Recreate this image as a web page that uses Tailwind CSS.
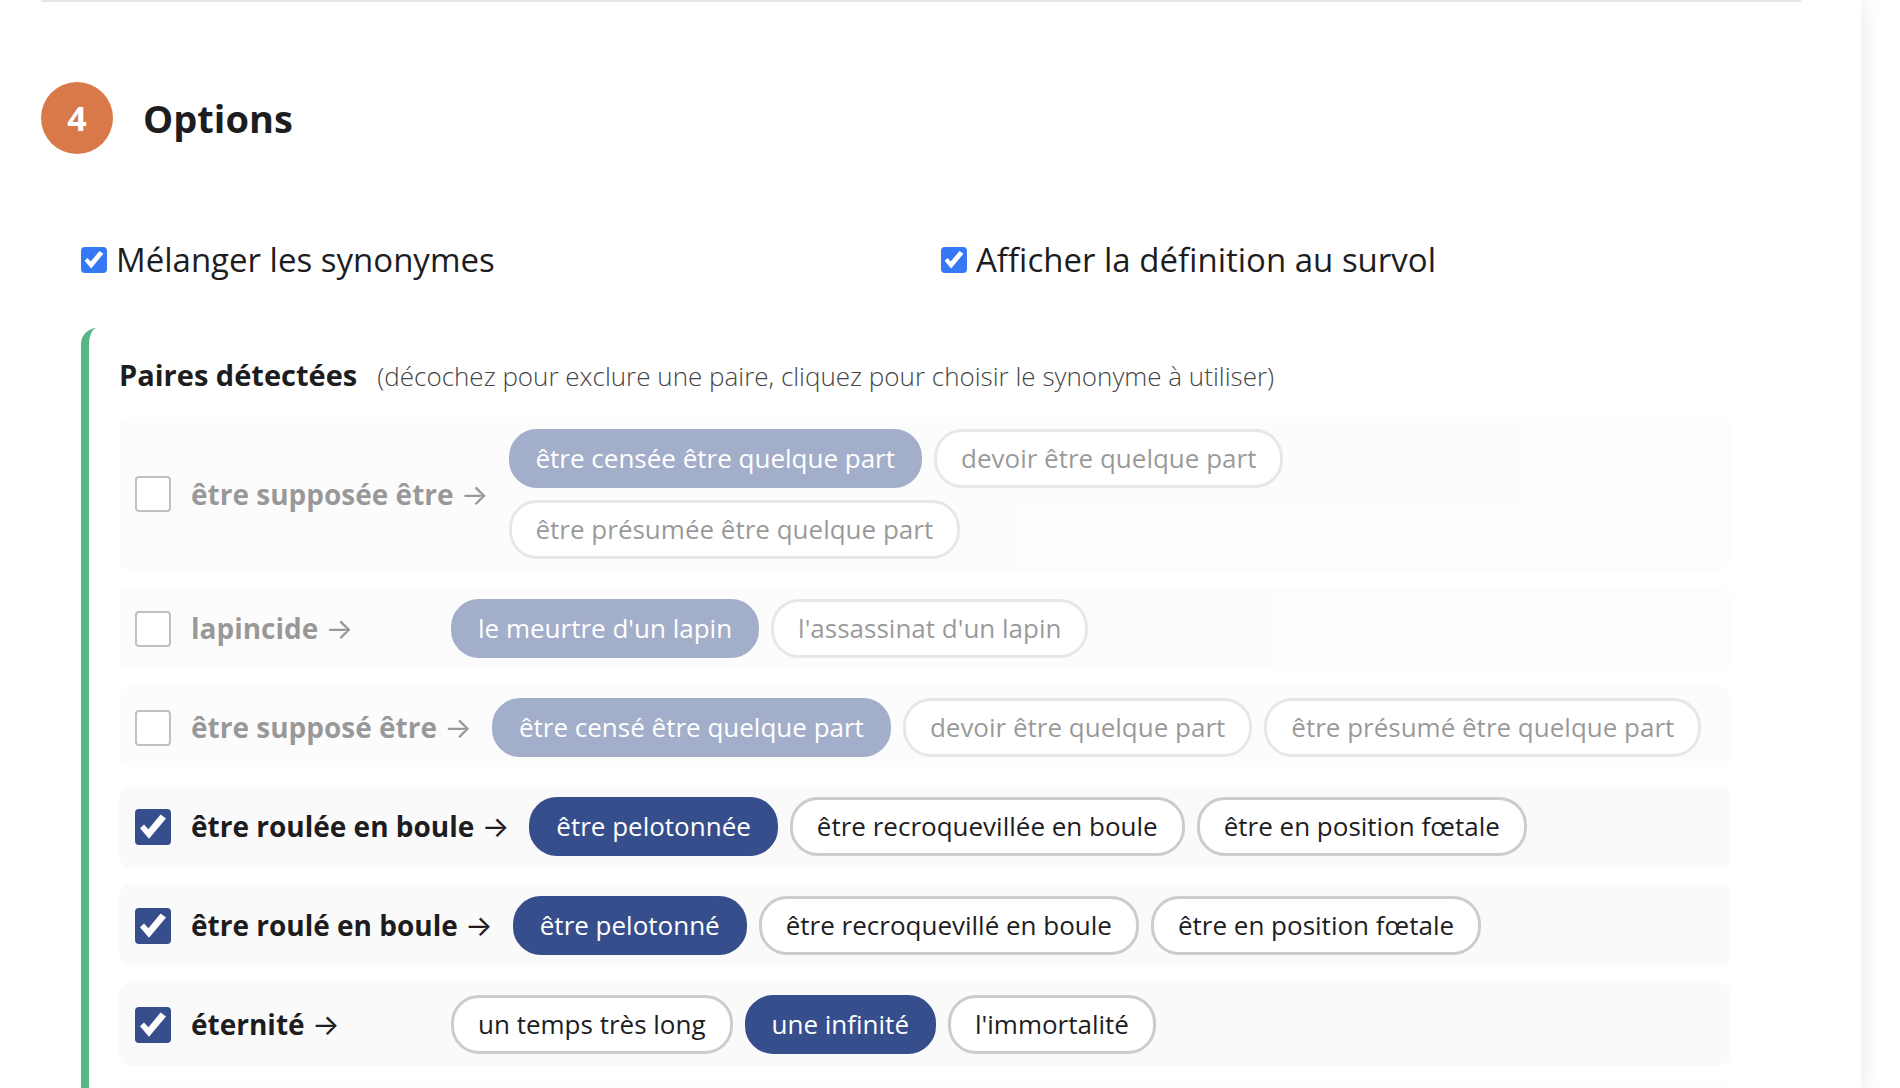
<!DOCTYPE html>
<html lang="fr">
  <head>
    <meta charset="UTF-8" />
    <meta name="viewport" content="width=device-width, initial-scale=1.0" />
    <title>Options</title>
    <script src="https://cdn.jsdelivr.net/npm/@tailwindcss/browser@4"></script>
  </head>
  <body class="bg-white font-['Open_Sans',sans-serif] text-[#1d1d1f]">
    <main class="mr-[39px] h-screen overflow-hidden bg-white pr-[60px] pl-[41px] shadow-[0_4px_24px_rgba(0,0,0,0.10)]">
      <section class="border-t-2 border-[#e5e5e5] pt-20">
        <header class="flex items-center gap-[30px]">
          <span class="flex size-[72px] items-center justify-center rounded-full bg-[#d97949] text-[34px] font-bold text-white">4</span>
          <h2 class="text-[38px] leading-[52px] font-bold">Options</h2>
        </header>

        <div class="px-10 pt-20">
          <div class="grid grid-cols-2 gap-10">
            <div class="flex items-center gap-[9px]">
              <span class="grid shrink-0">
                <input id="shuffle" type="checkbox" checked class="peer col-start-1 row-start-1 size-[26px] appearance-none rounded-[4px] border-2 border-[#767676] bg-white checked:border-[#3478f6] checked:bg-[#3478f6]" />
                <svg viewBox="0 0 36 36" class="pointer-events-none invisible col-start-1 row-start-1 size-[26px] fill-white peer-checked:visible"><path d="M5 19.2 9 15.4 13.4 20.2 25.6 5.6 31 9.4 14 29.8Z" /></svg>
              </span>
              <label for="shuffle" class="text-[33px] leading-[52px]">Mélanger les synonymes</label>
            </div>
            <div class="flex items-center gap-[9px]">
              <span class="grid shrink-0">
                <input id="hover" type="checkbox" checked class="peer col-start-1 row-start-1 size-[26px] appearance-none rounded-[4px] border-2 border-[#767676] bg-white checked:border-[#3478f6] checked:bg-[#3478f6]" />
                <svg viewBox="0 0 36 36" class="pointer-events-none invisible col-start-1 row-start-1 size-[26px] fill-white peer-checked:visible"><path d="M5 19.2 9 15.4 13.4 20.2 25.6 5.6 31 9.4 14 29.8Z" /></svg>
              </span>
              <label for="hover" class="text-[33px] leading-[52px]">Afficher la définition au survol</label>
            </div>
          </div>

          <div class="mt-[42px] rounded-2xl border-l-8 border-[#57b687] px-[30px] pt-[26px]">
            <h3 class="mb-5 flex items-baseline gap-5 leading-[41px]">
              <span class="text-[29px] font-bold">Paires détectées</span>
              <small class="text-[26px] font-light text-[#444446]">(décochez pour exclure une paire, cliquez pour choisir le synonyme à utiliser)</small>
            </h3>
            <ul id="pairs" class="flex flex-col gap-4"></ul>
          </div>
        </div>
      </section>
    </main>

    <script>
      const pairs = [
        { word: "être supposée être", on: false, pick: 0, syns: ["être censée être quelque part", "devoir être quelque part", "être présumée être quelque part"] },
        { word: "lapincide", on: false, pick: 0, syns: ["le meurtre d'un lapin", "l'assassinat d'un lapin"] },
        { word: "être supposé être", on: false, pick: 0, syns: ["être censé être quelque part", "devoir être quelque part", "être présumé être quelque part"] },
        { word: "être roulée en boule", on: true, pick: 0, syns: ["être pelotonnée", "être recroquevillée en boule", "être en position fœtale"] },
        { word: "être roulé en boule", on: true, pick: 0, syns: ["être pelotonné", "être recroquevillé en boule", "être en position fœtale"] },
        { word: "éternité", on: true, pick: 1, syns: ["un temps très long", "une infinité", "l'immortalité"] },
      ];

      const list = document.getElementById("pairs");

      function pill(pair, i, text, j) {
        const colors = pair.pick === j ? "border-[#364e8b] bg-[#364e8b] text-white" : "border-[#cccccc] bg-white";
        return `<button type="button" data-pair="${i}" data-syn="${j}" aria-pressed="${pair.pick === j}" class="rounded-[28px] border-3 px-6 pt-[6px] pb-[7px] text-[26px] leading-10 ${colors}">${text}</button>`;
      }

      function render() {
        list.innerHTML = pairs
          .map(
            (pair, i) => `
            <li class="flex items-center gap-5 rounded-xl bg-[#fafafa] px-4 py-3 ${pair.on ? "" : "opacity-45"}">
              <span class="grid shrink-0">
                <input id="pair-${i}" data-toggle="${i}" type="checkbox" ${pair.on ? "checked" : ""} class="peer col-start-1 row-start-1 size-9 appearance-none rounded-[4px] border-2 border-[#767676] bg-white checked:border-[#364e8b] checked:bg-[#364e8b]" />
                <svg viewBox="0 0 36 36" class="pointer-events-none invisible col-start-1 row-start-1 size-9 fill-white peer-checked:visible"><path d="M5 19.2 9 15.4 13.4 20.2 25.6 5.6 31 9.4 14 29.8Z" /></svg>
              </span>
              <label for="pair-${i}" class="min-w-60 shrink-0 text-[28px] leading-10 font-bold">${pair.word} <span class="font-['Inter',sans-serif] text-[29px] font-normal">→</span></label>
              <div class="flex grow flex-wrap gap-3">${pair.syns.map((text, j) => pill(pair, i, text, j)).join("")}</div>
            </li>`
          )
          .join("") + `<li class="h-[83px] rounded-xl bg-[#fdfdfd]"></li>`;
      }

      list.addEventListener("click", function (e) {
        const btn = e.target.closest("button");
        if (!btn) return;
        pairs[btn.dataset.pair].pick = Number(btn.dataset.syn);
        render();
      });

      list.addEventListener("change", function (e) {
        pairs[e.target.dataset.toggle].on = e.target.checked;
        render();
      });

      render();
    </script>
  </body>
</html>
